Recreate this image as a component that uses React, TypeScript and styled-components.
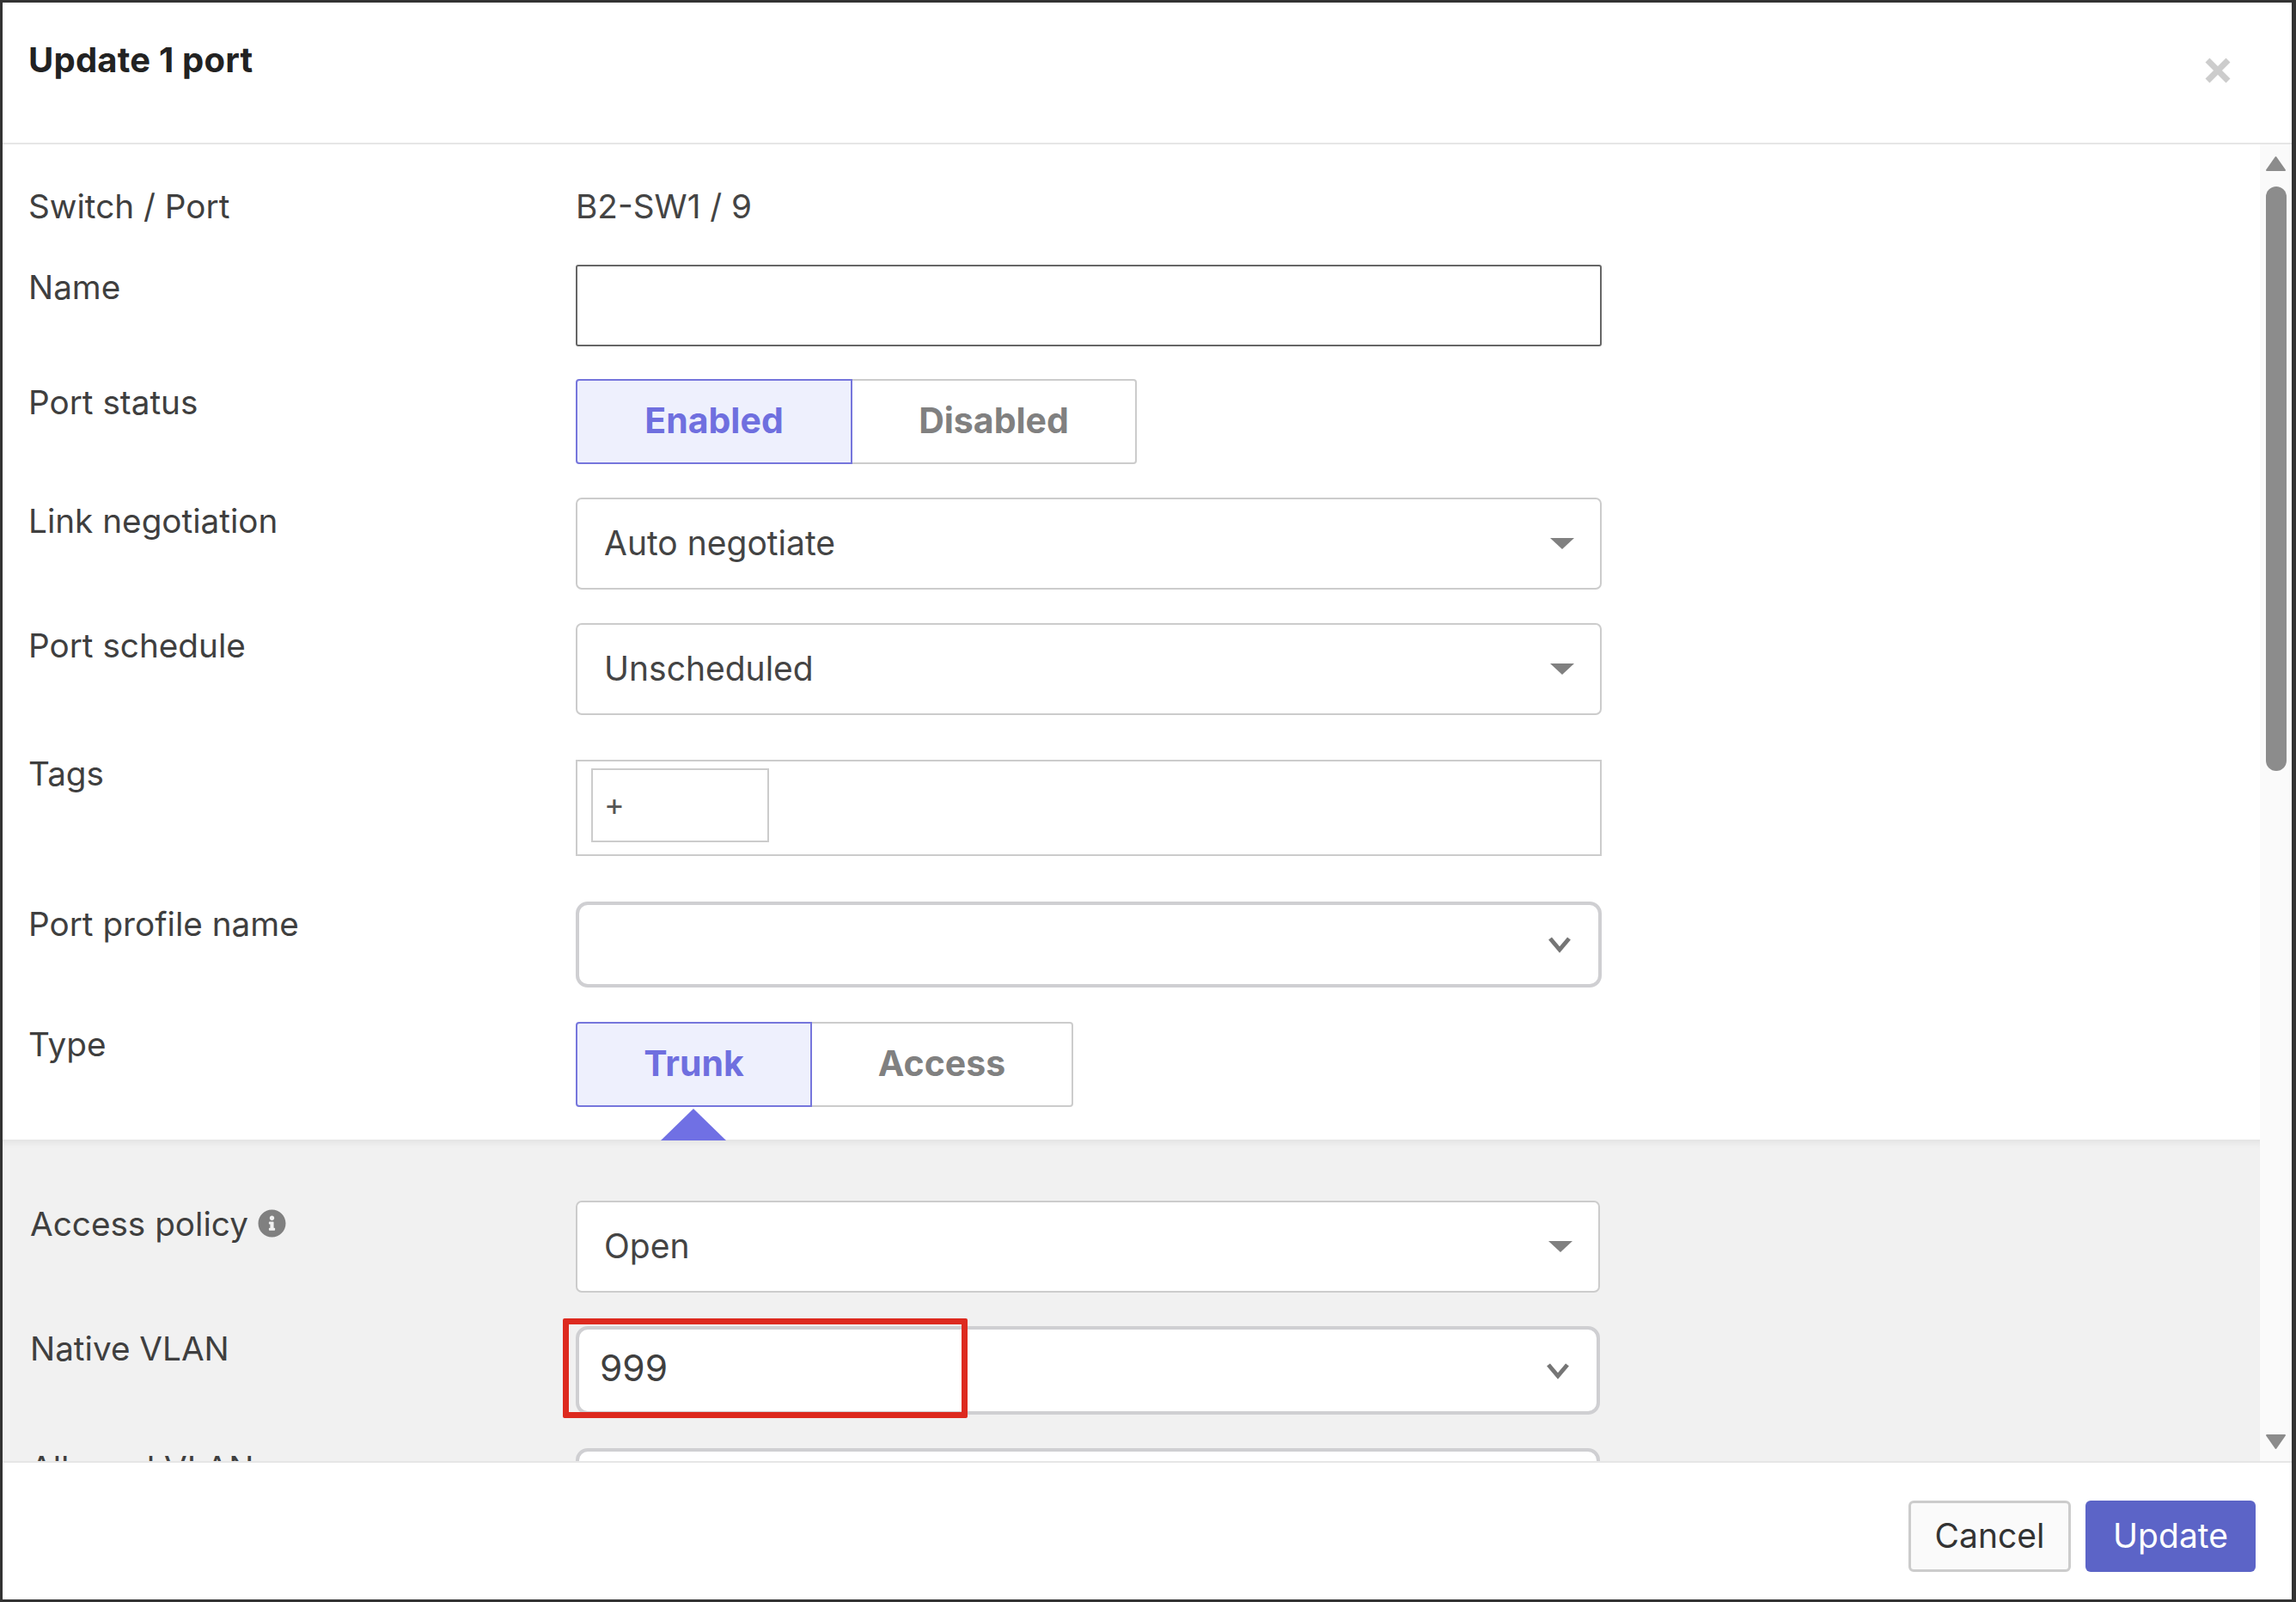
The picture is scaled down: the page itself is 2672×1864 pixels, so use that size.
import styled, { createGlobalStyle } from "styled-components";
import { FaInfoCircle } from "react-icons/fa";

const GlobalStyle = createGlobalStyle`
  html, body {
    margin: 0;
    padding: 0;
    background: #ffffff;
  }
  * {
    box-sizing: border-box;
  }
`;

const Dialog = styled.div`
  width: 2672px;
  height: 1864px;
  display: flex;
  flex-direction: column;
  background: #ffffff;
  border-style: solid;
  border-color: #333333;
  border-width: 3px 5px 3px 3px;
  font-family: Inter, "Liberation Sans", sans-serif;
  color: #3f3f3f;
`;

const Header = styled.div`
  height: 165px;
  flex: none;
  display: flex;
  justify-content: space-between;
  border-bottom: 2px solid #e6e6e6;
  padding: 42px 71px 0 30px;
`;

const Title = styled.h1`
  margin: 0;
  font-size: 40px;
  line-height: 50px;
  font-weight: 700;
  letter-spacing: 0.2px;
  color: #222222;
`;

const CloseIcon = styled.svg`
  width: 30px;
  height: 30px;
  margin-top: 22px;
`;

const Body = styled.div`
  flex: 1;
  min-height: 0;
  display: flex;
  overflow: hidden;
`;

const Content = styled.div`
  width: 2627px;
  flex: none;
  display: flex;
  flex-direction: column;
  overflow: hidden;
  padding-top: 50px;
`;

const Scrollbar = styled.div`
  flex: 1;
  display: flex;
  flex-direction: column;
  align-items: center;
  background: #fafafa;
  padding-top: 13px;
`;

const ArrowIcon = styled.svg`
  width: 25px;
  height: 20px;
  flex: none;
`;

const Thumb = styled.div`
  width: 24px;
  height: 680px;
  margin: 16px 0 770px;
  border-radius: 12px;
  background: #8c8c8c;
`;

const Row = styled.div<{ $top?: number }>`
  display: grid;
  grid-template-columns: 637px 1194px;
  margin-top: ${(p) => p.$top ?? 0}px;
  padding-left: 30px;
`;

const PanelRow = styled(Row)`
  grid-template-columns: 635px 1192px;
  padding-left: 32px;
`;

const Label = styled.div<{ $top?: number }>`
  margin-top: ${(p) => p.$top ?? 0}px;
  font-size: 38.7px;
  line-height: 44px;
  color: #3f3f3f;
  display: flex;
  align-items: center;
  gap: 11px;
  height: 44px;
`;

const Value = styled.div`
  font-size: 38.7px;
  line-height: 44px;
  color: #444444;
`;

const NameInput = styled.div`
  height: 95px;
  border: 2px solid #666666;
  border-radius: 3px;
  background: #ffffff;
`;

const Toggle = styled.div`
  display: flex;
  position: relative;
`;

const Segment = styled.div<{ $active?: boolean; $width: number }>`
  width: ${(p) => p.$width}px;
  height: 99px;
  display: flex;
  align-items: center;
  justify-content: center;
  padding-bottom: 3px;
  font-size: 41px;
  font-weight: 700;
  background: ${(p) => (p.$active ? "#eef0fd" : "#ffffff")};
  color: ${(p) => (p.$active ? "#6f6fdf" : "#808080")};
  border: 2px solid ${(p) => (p.$active ? "#7676dc" : "#cccccc")};
  border-left-width: ${(p) => (p.$active ? 2 : 0)}px;
  border-radius: ${(p) => (p.$active ? "4px 0 0 4px" : "0 4px 4px 0")};
`;

const Pointer = styled.div`
  position: absolute;
  left: 99px;
  top: 101px;
  width: 0;
  height: 0;
  border-left: 38px solid transparent;
  border-right: 38px solid transparent;
  border-bottom: 37px solid #7070e4;
`;

const Select = styled.div`
  height: 107px;
  display: flex;
  align-items: center;
  justify-content: space-between;
  padding: 0 30px 3px 31px;
  border: 2px solid #cccccc;
  border-radius: 7px;
  background: #ffffff;
  font-size: 39px;
  color: #444444;
`;

const Caret = styled.div`
  width: 0;
  height: 0;
  margin-top: 3px;
  border-left: 14px solid transparent;
  border-right: 14px solid transparent;
  border-top: 13px solid #808080;
`;

const TagsBox = styled.div`
  height: 112px;
  padding: 8px 16px;
  border: 2px solid #cccccc;
  background: #ffffff;
`;

const TagInput = styled.div`
  width: 207px;
  height: 86px;
  display: flex;
  align-items: center;
  padding: 0 0 2px 13px;
  border: 2px solid #cccccc;
  font-size: 36px;
  color: #555555;
`;

const Combo = styled.div<{ $height?: number }>`
  height: ${(p) => p.$height ?? 100}px;
  position: relative;
  display: flex;
  align-items: center;
  justify-content: space-between;
  padding: 0 30px 0 24px;
  border: 4px solid #cfcfd2;
  border-radius: 14px;
  background: #ffffff;
  font-size: 42.5px;
  color: #3f3f3f;
`;

const ComboText = styled.span`
  margin-top: -6px;
`;

const Chevron = styled.svg`
  width: 30px;
  height: 20px;
  flex: none;
`;

const Highlight = styled.div`
  position: absolute;
  left: -19px;
  top: -13px;
  width: 471px;
  height: 116px;
  border: 7px solid #dd2a1f;
  border-radius: 2px;
`;

const Panel = styled.div`
  flex: 1;
  margin-top: 38px;
  padding-top: 71px;
  background: #f1f1f1;
  box-shadow: inset 0 9px 8px -6px rgba(0, 0, 0, 0.07);
`;

const InfoBadge = styled(FaInfoCircle)`
  width: 33px;
  height: 33px;
  margin-top: -2px;
  color: #808080;
`;

const Footer = styled.div`
  height: 161px;
  flex: none;
  display: flex;
  justify-content: flex-end;
  gap: 17px;
  padding: 44px 42px 0 0;
  border-top: 2px solid #e6e6e6;
`;

const Button = styled.button<{ $primary?: boolean }>`
  height: 83px;
  width: ${(p) => (p.$primary ? 198 : 189)}px;
  padding: 0 0 2px;
  font-family: inherit;
  font-size: 39px;
  border-radius: 6px;
  border: ${(p) => (p.$primary ? "0" : "3px solid #cccccc")};
  background: ${(p) => (p.$primary ? "#5c64c7" : "#fafafa")};
  color: ${(p) => (p.$primary ? "#ffffff" : "#333333")};
`;

const Chev = () => (
  <Chevron viewBox="0 0 30 20" fill="none">
    <path d="M4 3 L15 16 L26 3" stroke="#757575" strokeWidth="5" />
  </Chevron>
);

export default function App() {
  return (
    <>
      <GlobalStyle />
      <Dialog>
        <Header>
          <Title>Update 1 port</Title>
          <CloseIcon viewBox="0 0 30 30">
            <path d="M3 3 L27 27 M27 3 L3 27" stroke="#cccccc" strokeWidth="7" />
          </CloseIcon>
        </Header>
        <Body>
          <Content>
            <Row>
              <Label>Switch / Port</Label>
              <Value>B2-SW1 / 9</Value>
            </Row>
            <Row $top={46}>
              <Label $top={4}>Name</Label>
              <NameInput />
            </Row>
            <Row $top={38}>
              <Label $top={5}>Port status</Label>
              <Toggle>
                <Segment $active $width={322}>Enabled</Segment>
                <Segment $width={331}>Disabled</Segment>
              </Toggle>
            </Row>
            <Row $top={39}>
              <Label $top={5}>Link negotiation</Label>
              <Select>
                Auto negotiate
                <Caret />
              </Select>
            </Row>
            <Row $top={39}>
              <Label $top={4}>Port schedule</Label>
              <Select>
                Unscheduled
                <Caret />
              </Select>
            </Row>
            <Row $top={52}>
              <Label $top={-6}>Tags</Label>
              <TagsBox>
                <TagInput>+</TagInput>
              </TagsBox>
            </Row>
            <Row $top={53}>
              <Label $top={4}>Port profile name</Label>
              <Combo>
                <span />
                <Chev />
              </Combo>
            </Row>
            <Row $top={40}>
              <Label $top={4}>Type</Label>
              <Toggle>
                <Segment $active $width={275}>Trunk</Segment>
                <Segment $width={304}>Access</Segment>
                <Pointer />
              </Toggle>
            </Row>
            <Panel>
              <PanelRow>
                <Label $top={5}>
                  Access policy
                  <InfoBadge />
                </Label>
                <Select>
                  Open
                  <Caret />
                </Select>
              </PanelRow>
              <PanelRow $top={39}>
                <Label $top={4}>Native VLAN</Label>
                <Combo $height={103}>
                  <ComboText>999</ComboText>
                  <Chev />
                  <Highlight />
                </Combo>
              </PanelRow>
              <PanelRow $top={39}>
                <Label $top={1}>Allowed VLAN</Label>
                <Combo />
              </PanelRow>
            </Panel>
          </Content>
          <Scrollbar>
            <ArrowIcon viewBox="0 0 25 20">
              <path d="M12.5 2 L23 17 L2 17 Z" fill="#8c8c8c" stroke="#8c8c8c" strokeWidth="2" strokeLinejoin="round" />
            </ArrowIcon>
            <Thumb />
            <ArrowIcon viewBox="0 0 25 20">
              <path d="M2 3 L23 3 L12.5 18 Z" fill="#8c8c8c" stroke="#8c8c8c" strokeWidth="2" strokeLinejoin="round" />
            </ArrowIcon>
          </Scrollbar>
        </Body>
        <Footer>
          <Button>Cancel</Button>
          <Button $primary>Update</Button>
        </Footer>
      </Dialog>
    </>
  );
}
